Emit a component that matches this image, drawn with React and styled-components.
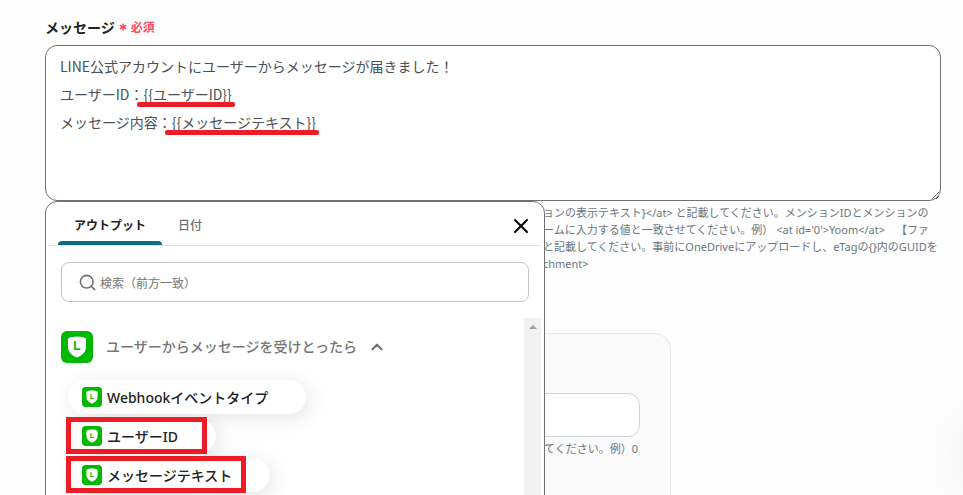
import React, { useState } from "react";
import styled, { createGlobalStyle } from "styled-components";
import { Asterisk, ChevronUp, Search, X } from "lucide-react";

const MESSAGE = `LINE公式アカウントにユーザーからメッセージが届きました！
ユーザーID：{{ユーザーID}}
メッセージ内容：{{メッセージテキスト}}`;

const HELP_LINES = [
  "ョンの表示テキスト}</at> と記載してください。メンションIDとメンションの",
  "ームに入力する値と一致させてください。例） <at id='0'>Yoom</at>　【ファ",
  "と記載してください。事前にOneDriveにアップロードし、eTagの{}内のGUIDを",
  "chment>"
];

const OUTPUTS = [
  { name: "Webhookイベントタイプ" },
  { name: "ユーザーID", frameInset: "9px" },
  { name: "メッセージテキスト", frameInset: "24px" }
];

const LineIcon = ({ size }) => (
  <svg width={size} height={size} viewBox="0 0 32 32" aria-hidden="true">
    <rect width="32" height="32" rx="6" fill="#00b900" />
    <path
      d="M16 5.5C19.5 5.5 22.5 6.2 25 7.4V16C25 20.8 21.4 24.4 16 26.6C10.6 24.4 7 20.8 7 16V7.4C9.5 6.2 12.5 5.5 16 5.5Z"
      fill="#fff"
    />
    <text
      x="16"
      y="19"
      textAnchor="middle"
      fontFamily="Liberation Sans, sans-serif"
      fontSize="12"
      fontWeight="bold"
      fill="#00b900"
    >
      L
    </text>
  </svg>
);

const App = () => {
  const [message, setMessage] = useState(MESSAGE);
  const [tab, setTab] = useState("output");

  return (
    <Page>
      <GlobalStyle />
      <Label htmlFor="message">
        メッセージ
        <Required>
          <Asterisk size={12} strokeWidth={3} />
          必須
        </Required>
      </Label>
      <Field>
        <MessageBox
          id="message"
          spellCheck={false}
          value={message}
          onChange={e => setMessage(e.target.value)}
        />
        <Underline top="57px" left="92px" width="98px" />
        <Underline top="85px" left="120px" width="154px" />
        <Popup>
          <TabBar>
            <Tab active={tab === "output"} onClick={() => setTab("output")}>
              アウトプット
            </Tab>
            <Tab active={tab === "date"} onClick={() => setTab("date")}>
              日付
            </Tab>
            <CloseButton aria-label="閉じる">
              <X size={24} />
            </CloseButton>
          </TabBar>
          <SearchBox>
            <Search size={19} />
            <SearchInput
              aria-label="検索"
              placeholder="検索（前方一致）"
            />
          </SearchBox>
          <PopupBody>
            <OutputList>
              <GroupButton>
                <LineIcon size={32} />
                <GroupTitle>ユーザーからメッセージを受けとったら</GroupTitle>
                <ChevronUp size={18} strokeWidth={3} />
              </GroupButton>
              {OUTPUTS.map(item => (
                <ChipRow key={item.name}>
                  <Chip>
                    <LineIcon size={20} />
                    {item.name}
                    {item.frameInset && <RedFrame inset={item.frameInset} />}
                  </Chip>
                </ChipRow>
              ))}
            </OutputList>
            <ScrollTrack>
              <ScrollArrow />
            </ScrollTrack>
          </PopupBody>
        </Popup>
      </Field>
      <Help>
        {HELP_LINES.map(line => (
          <HelpLine key={line}>{line}</HelpLine>
        ))}
      </Help>
      <Card>
        <CardInput aria-label="メンションID" />
        <CardHelp>てください。例）0</CardHelp>
      </Card>
      <FloatingShadow />
    </Page>
  );
};

export default App;

const GlobalStyle = createGlobalStyle`
  * {
    box-sizing: border-box;
  }
  body {
    margin: 0;
    background-color: #fefefe;
  }
  body, button, input, textarea {
    font-family: "Noto Sans", "Noto Sans CJK JP", sans-serif;
  }
  button {
    border: none;
    background: none;
    padding: 0;
    cursor: pointer;
  }
`;

const Page = styled.main`
  position: relative;
  height: 100vh;
  overflow: hidden;
  padding: 17px 22px 0 45px;
`;

const Label = styled.label`
  display: flex;
  align-items: center;
  height: 20px;
  font-size: 14px;
  font-weight: 700;
  color: #222;
`;

const Required = styled.span`
  display: flex;
  align-items: center;
  gap: 2px;
  margin-left: 2px;
  font-size: 12px;
  color: #ff4b5f;
`;

const Field = styled.div`
  position: relative;
  margin-top: 8px;
`;

const MessageBox = styled.textarea`
  display: block;
  width: 100%;
  height: 156px;
  padding: 6px 14px;
  border: 1px solid #707070;
  border-radius: 12px;
  background-color: #fff;
  font-family: "Noto Sans CJK JP", sans-serif;
  font-size: 14px;
  line-height: 28px;
  color: #495057;
  resize: vertical;
  outline: none;
`;

const Underline = styled.span`
  position: absolute;
  top: ${props => props.top};
  left: ${props => props.left};
  width: ${props => props.width};
  height: 5px;
  border-radius: 2px;
  background-color: #ee1c25;
`;

const Popup = styled.section`
  position: absolute;
  z-index: 1;
  top: 100%;
  left: 0;
  width: 500px;
  padding: 0 3px;
  border: 1px solid #707070;
  border-radius: 12px;
  background-color: #fff;
`;

const TabBar = styled.div`
  display: flex;
  height: 44px;
  padding: 0 8px 0 9px;
  border-bottom: 1px solid #e0e0e0;
`;

const Tab = styled.button.withConfig({
  shouldForwardProp: prop => prop !== "active"
})`
  position: relative;
  padding: 2px 16px 0;
  font-size: 12px;
  font-weight: ${props => (props.active ? 700 : 500)};
  color: ${props => (props.active ? "#222" : "#707070")};

  &::after {
    content: "";
    display: ${props => (props.active ? "block" : "none")};
    position: absolute;
    left: 0;
    right: 0;
    bottom: 0;
    height: 4px;
    border-radius: 4px 4px 0 0;
    background-color: #0b6b82;
  }
`;

const CloseButton = styled.button`
  display: flex;
  align-items: center;
  margin-left: auto;
  padding-top: 4px;
  color: #000;
`;

const SearchBox = styled.div`
  display: flex;
  align-items: center;
  height: 40px;
  margin: 16px 12px;
  padding-left: 16px;
  border: 1px solid #c4c4c4;
  border-radius: 8px;
  color: #707070;
`;

const SearchInput = styled.input`
  flex: 1;
  padding: 2px 3px 0;
  border: none;
  outline: none;
  background: none;
  font-size: 12px;

  &::placeholder {
    color: #757575;
  }
`;

const PopupBody = styled.div`
  display: flex;
`;

const OutputList = styled.div`
  flex: 1;
  padding: 13px 12px 40px;
`;

const GroupButton = styled.button`
  display: flex;
  align-items: center;
  margin-bottom: 14px;
  color: #757575;
`;

const GroupTitle = styled.span`
  margin: 0 11px 0 13px;
  padding-bottom: 2px;
  font-size: 14px;
  font-weight: 500;
`;

const ChipRow = styled.div`
  padding: 3px 7px 2px;
`;

const Chip = styled.button`
  position: relative;
  display: flex;
  align-items: center;
  gap: 5px;
  height: 34px;
  padding: 0 38px 0 14px;
  border-radius: 17px;
  background-color: #fff;
  box-shadow: 4px 4px 20px rgba(0, 0, 0, 0.1);
  font-size: 14px;
  font-weight: 500;
  color: #222;
`;

const RedFrame = styled.span.withConfig({
  shouldForwardProp: prop => prop !== "inset"
})`
  position: absolute;
  top: -2px;
  bottom: -1px;
  left: -2px;
  right: ${props => props.inset};
  border: 5px solid #ee1c25;
`;

const ScrollTrack = styled.div`
  width: 17px;
  padding-top: 7px;
  background-color: #f1f1f1;
`;

const ScrollArrow = styled.div`
  width: 8px;
  margin: 0 auto;
  border: 4px solid transparent;
  border-top: none;
  border-bottom-color: #a3a3a3;
`;

const Help = styled.p`
  margin: 3px 0 0;
  padding-left: 498px;
  font-size: 11px;
  line-height: 17px;
  text-spacing-trim: space-all;
  color: #6c757d;
`;

const HelpLine = styled.span`
  display: block;
  white-space: nowrap;
`;

const Card = styled.section`
  width: 70%;
  max-width: 626px;
  height: 260px;
  margin-top: 61px;
  padding: 59px 30px;
  border: 1px solid #e5e5e5;
  border-radius: 16px;
  background-color: #fafafa;
`;

const CardInput = styled.input`
  display: block;
  width: 100%;
  height: 44px;
  border: 1px solid #ced4da;
  border-radius: 12px;
  background-color: #fff;
`;

const CardHelp = styled.p`
  margin: 3px 2px 0;
  font-size: 11px;
  line-height: 17px;
  text-align: right;
  color: #6c757d;
`;

const FloatingShadow = styled.div`
  position: absolute;
  right: -60px;
  bottom: 10px;
  width: 60px;
  height: 60px;
  border-radius: 50%;
  box-shadow: 0 0 60px rgba(0, 0, 0, 0.12);
`;
